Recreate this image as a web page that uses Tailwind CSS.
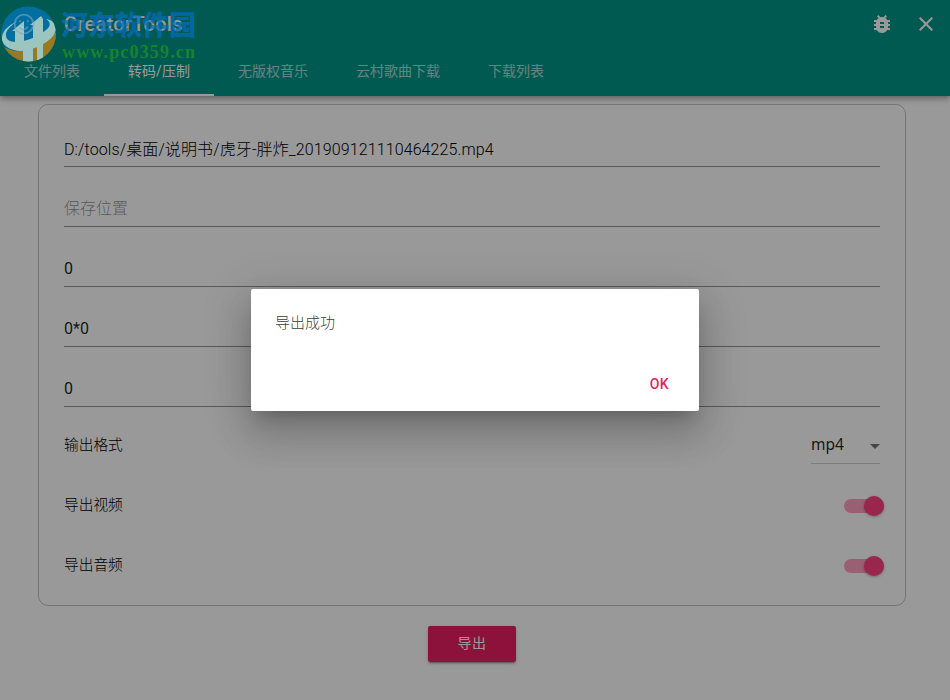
<!DOCTYPE html>
<html lang="zh-CN">
<head>
  <meta charset="UTF-8" />
  <meta name="viewport" content="width=device-width, initial-scale=1.0"/>
  <title>CreatorTools</title>
  <script src="https://cdn.jsdelivr.net/npm/@tailwindcss/browser@4"></script>
</head>
<body class="relative h-[700px] w-[950px] overflow-hidden bg-white font-[Roboto,'Noto_Sans_CJK_SC',sans-serif] text-black/87">

  <!-- App bar -->
  <header class="relative z-10 h-24 bg-[#009688] text-white shadow-[0_2px_4px_-1px_rgba(0,0,0,.2),0_4px_5px_rgba(0,0,0,.14),0_1px_10px_rgba(0,0,0,.12)]">
    <div class="flex h-12 items-center pl-3 pr-3">
      <svg class="size-6" viewBox="0 0 24 24" fill="none" stroke="currentColor" stroke-width="2">
        <circle cx="12" cy="12" r="9" />
        <path d="M8 14q4 5 8 0M8.500 8.500v2M15.500 8.500v2" />
      </svg>
      <h1 class="ml-7 text-xl font-medium tracking-[0.3px]">CreatorTools</h1>
      <svg class="ml-auto size-6" viewBox="0 0 24 24" fill="currentColor">
        <path d="M20 8h-2.810c-.45-.78-1.070-1.450-1.820-1.960L17 4.410 15.590 3l-2.170 2.170C12.960 5.060 12.490 5 12 5s-.96.06-1.410.17L8.410 3 7 4.410l1.620 1.630C7.880 6.550 7.260 7.220 6.810 8H4v2h2.090c-.05.33-.09.66-.09 1v1H4v2h2v1c0 .34.04.67.09 1H4v2h2.810c1.040 1.790 2.970 3 5.190 3s4.150-1.210 5.190-3H20v-2h-2.090c.05-.33.09-.66.09-1v-1h2v-2h-2v-1c0-.34-.04-.67-.09-1H20V8zm-6 8h-4v-2h4v2zm0-4h-4v-2h4v2z" />
      </svg>
      <svg class="ml-5 size-6" viewBox="0 0 24 24" fill="currentColor">
        <path d="M19 6.410L17.590 5 12 10.590 6.410 5 5 6.410 10.590 12 5 17.590 6.410 19 12 13.410 17.590 19 19 17.590 13.410 12z" />
      </svg>
    </div>
    <nav class="flex h-12 text-sm leading-[46px] text-white/65">
      <a class="px-6">文件列表</a>
      <a class="w-[110px] border-b-2 border-white text-center text-white">转码/压制</a>
      <a class="px-6">无版权音乐</a>
      <a class="px-6">云村歌曲下载</a>
      <a class="px-6">下载列表</a>
    </nav>
  </header>

  <!-- Form -->
  <main class="flex flex-col items-center">
    <section class="mt-2 -ml-1.5 h-[502px] w-[868px] rounded-[10px] border border-black/23 px-[25px] pt-[26px]">
      <div class="h-9 border-b border-black/42 pt-[9px] font-light leading-5 tracking-[0.11px] text-black">D:/tools/桌面/说明书/虎牙-胖炸_201909121110464225.mp4</div>
      <div class="mt-6 h-9 border-b border-black/42 pt-[8px] font-light leading-5 text-black/45">保存位置</div>
      <div class="mt-6 h-9 border-b border-black/42 pt-[8px] leading-5">0</div>
      <div class="mt-6 h-9 border-b border-black/42 pt-[8px] leading-5">0*0</div>
      <div class="mt-6 h-9 border-b border-black/42 pt-[8px] leading-5">0</div>

      <div class="flex h-[60px] items-start justify-between pt-[21px] text-[14.7px]">
        <span class="mt-[7px] font-light leading-5 text-black">输出格式</span>
        <div class="flex h-9 w-[69px] items-center justify-between border-b border-black/18 pb-px text-base">
          <span class="text-[15.500px] font-['Noto_Sans']">mp4</span>
          <svg class="-mr-[1px] mt-0.5 h-[5px] w-3" viewBox="0 0 12 5"><path d="M1 0h10L6 5z" fill="#757575" /></svg>
        </div>
      </div>
      <div class="flex h-[60px] items-center justify-between pt-4 text-[14.7px]">
        <span class="font-light leading-5 text-black">导出视频</span>
        <div class="-mr-1 mt-0.5 flex h-5 w-10 items-center rounded-full">
          <div class="h-3.5 w-full rounded-full bg-[#ff4081]/50"></div>
          <div class="-ml-5 size-5 shrink-0 rounded-full bg-[#ff4081] shadow-[0_1px_3px_rgba(0,0,0,.3)]"></div>
        </div>
      </div>
      <div class="flex h-[60px] items-center justify-between pt-4 text-[14.7px]">
        <span class="font-light leading-5 text-black">导出音频</span>
        <div class="-mr-1 mt-0.5 flex h-5 w-10 items-center rounded-full">
          <div class="h-3.5 w-full rounded-full bg-[#ff4081]/50"></div>
          <div class="-ml-5 size-5 shrink-0 rounded-full bg-[#ff4081] shadow-[0_1px_3px_rgba(0,0,0,.3)]"></div>
        </div>
      </div>
    </section>
    <button class="mt-5 -ml-1.5 h-9 w-[88px] rounded-xs bg-[#e91e63] pb-0.5 text-sm tracking-[0.4px] text-white shadow-[0_3px_1px_-2px_rgba(0,0,0,.2),0_2px_2px_rgba(0,0,0,.14),0_1px_5px_rgba(0,0,0,.12)]">导出</button>
  </main>

  <!-- Modal -->
  <div class="absolute inset-0 z-20 bg-black/40">
    <div class="absolute left-[251px] top-[289px] flex h-[122px] w-[448px] flex-col justify-between rounded-xs bg-white shadow-[0_11px_15px_-7px_rgba(0,0,0,.2),0_24px_38px_3px_rgba(0,0,0,.14),0_9px_46px_8px_rgba(0,0,0,.12)]">
      <p class="px-6 pt-6 text-[15px] font-light leading-5 text-black/80">导出成功</p>
      <div class="flex justify-end pb-[17px] pr-[30px]">
        <button class="text-sm font-medium tracking-[0.4px] text-[#e91e63]">OK</button>
      </div>
    </div>
  </div>

  <!-- Site watermark -->
  <div class="absolute left-0 top-0 z-30 opacity-85">
    <svg class="block h-[68px] w-[210px]" viewBox="0 0 210 68">
      <clipPath id="disc"><circle cx="28.500" cy="34" r="27.500" /></clipPath>
      <g clip-path="url(#disc)">
        <path d="M0 5h58v58H0z" fill="#0073ad" />
        <path d="M0 46l14 5 20-3 24-17v34H0z" fill="#b3801c" />
        <g fill="#b7d8d1">
          <path d="M15 43V31h-3l12-10v21zM33 40V25h-3l11-9 2 3v18zM23 47h10v17H23zM37 44h6v17h-6z" />
          <path d="M18 21C8 25 1 32 2 40c2 8 13 13 26 10 14-3 27-12 28-21 0-6-4-9-10-10 5 3 5 7 0 11-6 5-14 9-23 11-9 2-16 1-17-5-1-5 5-11 12-15z" />
        </g>
      </g>
      <circle cx="24" cy="24" r="9.500" fill="none" stroke="#6fa9cc" stroke-width="1.700" opacity=".6" />
      <path d="M20 27q4 5 8 0M20 20v2M28 20v2" fill="none" stroke="#6fa9cc" stroke-width="1.500" opacity=".6" />
      <text x="61" y="35" textLength="135" font-family="Noto Sans CJK SC" font-size="27" font-weight="900" fill="#006fbd" opacity=".85">河东软件园</text>
      <text x="62" y="58" textLength="133" font-family="Liberation Serif" font-size="18" font-weight="700" fill="#1b8b2a">www.pc0359.cn</text>
    </svg>
  </div>
</body>
</html>
